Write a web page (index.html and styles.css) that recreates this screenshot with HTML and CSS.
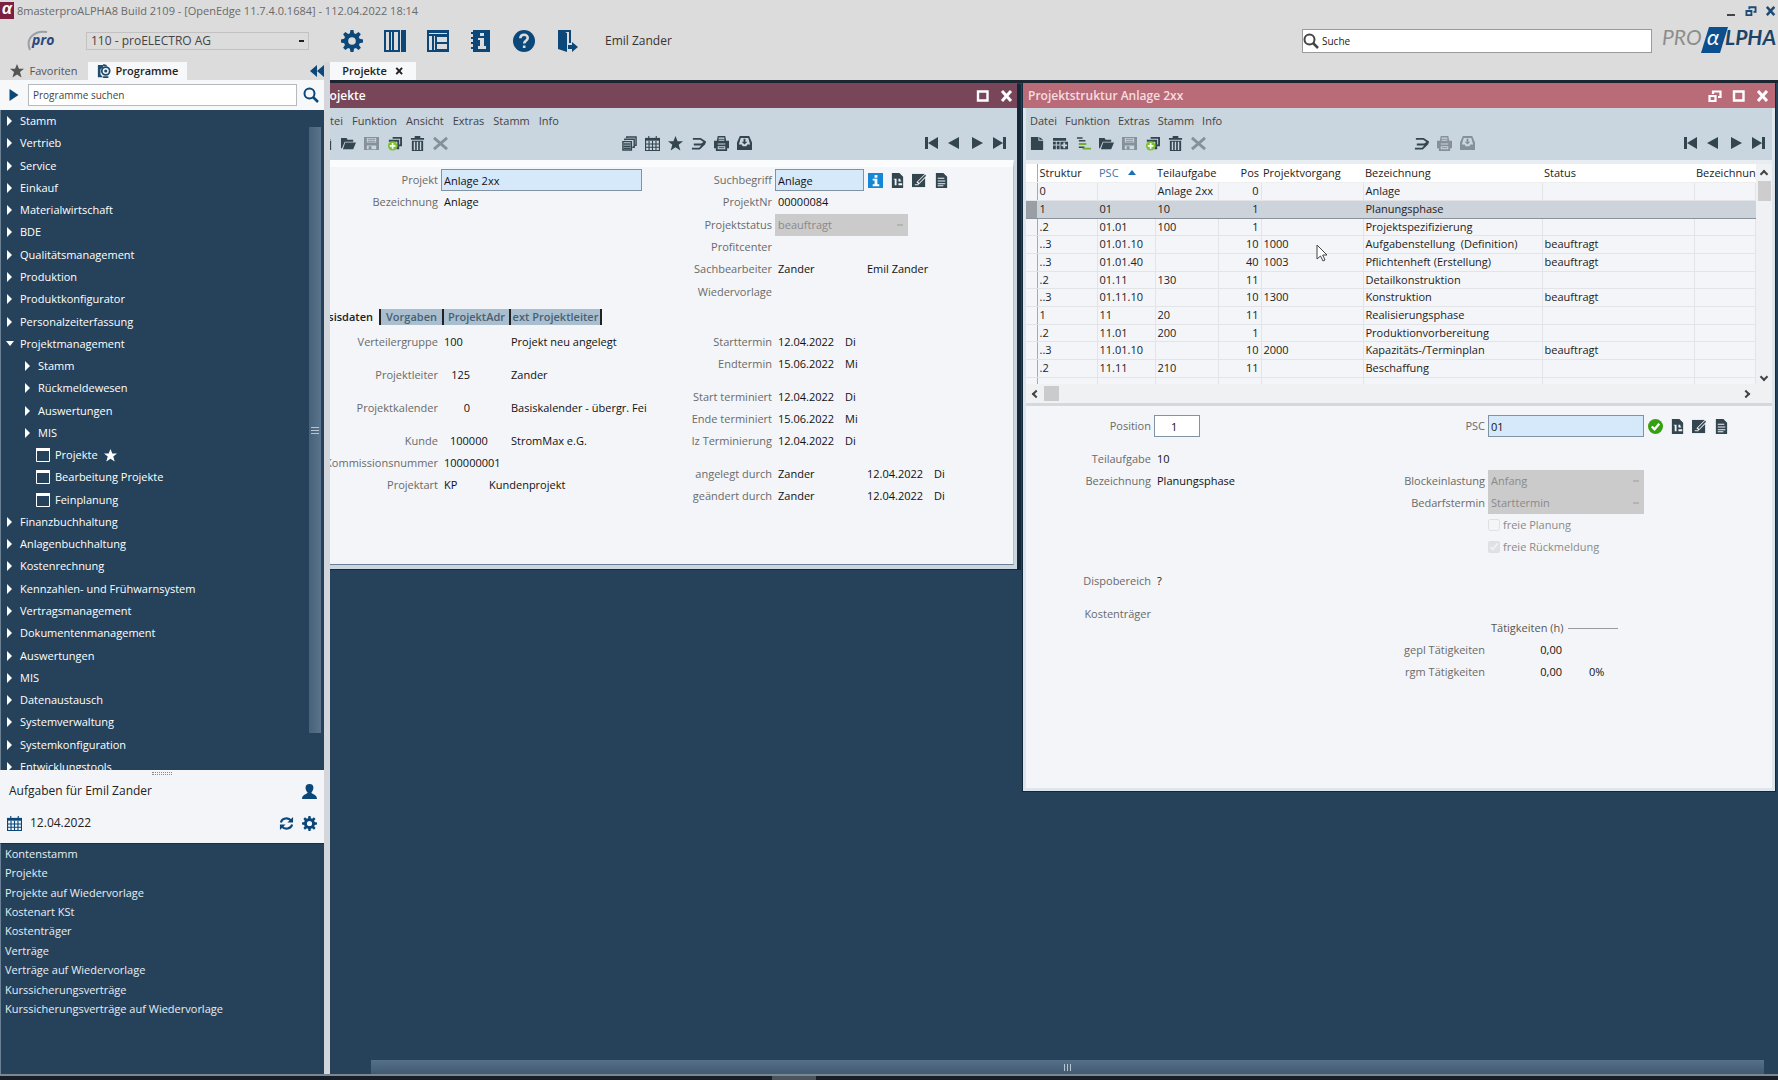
FILE: index.html
```html
<!DOCTYPE html>
<html lang="de">
<head>
<meta charset="utf-8">
<title>proALPHA – Projektstruktur</title>
<link rel="stylesheet" href="styles.css">
</head>
<body>
<svg class="sprite" aria-hidden="true">
  <symbol id="gear" viewBox="0 0 22 22"><path fill="currentColor" fill-rule="evenodd" d="M9.5 0h3l.5 3.2 1.8.8L17.500 2l2.300 2.300-2 2.800.8 1.700 3.400.6v3.200l-3.300.6-.8 1.800 2 2.700-2.300 2.300-2.700-1.900-1.900.7-.5 3.200h-3l-.6-3.200-1.800-.7L4.400 20l-2.300-2.300 1.900-2.700-.8-1.800L0 12.600V9.400l3.200-.6.800-1.700-1.900-2.800L4.400 2l2.700 1.900 1.800-.7zM11 7.200a3.800 3.800 0 1 0 0 7.600 3.800 3.800 0 0 0 0-7.600z"/></symbol>
  <symbol id="panel" viewBox="0 0 22 22"><path fill="currentColor" fill-rule="evenodd" d="M0 0h16v22H0zM2 2v18h3V2zm5 0v18h1V2zm3 0v18h4V2zM17 0h5v22h-5z"/></symbol>
  <symbol id="layout" viewBox="0 0 22 22"><path fill="currentColor" fill-rule="evenodd" d="M0 0h22v22H0zM2 3v1h18V3zM2 6v14h3V6zm5 0v14h1V6zm3 1v5h10V7zm0 7v5h10v-5z"/></symbol>
  <symbol id="infobook" viewBox="0 0 22 22"><path fill="currentColor" fill-rule="evenodd" d="M3 0h17v22H3v-3H1v-2h2v-3H1v-2h2V9H1V7h2V4H1V2h2zM10 3v3h4V3zM8 8v2h2v6H8v3h8v-3h-2V8z"/></symbol>
  <symbol id="help" viewBox="0 0 22 22"><circle cx="11" cy="11" r="11" fill="currentColor"/><path d="M7.300 8.300C7.500 3.500 15 3.700 14.700 8.200c-.2 2.600-3.500 2.500-3.500 5.300M11.200 15.500v2.600" fill="none" stroke="#dcdcdc" stroke-width="2.600"/></symbol>
  <symbol id="door" viewBox="0 0 22 22"><path fill="currentColor" d="M2 0h3l6 3v19l-9-3z"/><path fill="none" stroke="currentColor" stroke-width="2" d="M3 1h11v12"/><path fill="currentColor" d="M12 15h4v-3l6 5-6 5v-3h-4z"/></symbol>
  <symbol id="lens" viewBox="0 0 16 16"><circle cx="6.500" cy="6.500" r="5" fill="none" stroke="currentColor" stroke-width="2"/><path d="M10 10l5 5" stroke="currentColor" stroke-width="2.500"/></symbol>
  <symbol id="star" viewBox="0 0 16 16"><path fill="currentColor" d="M8 0l2.200 5.500H16l-4.600 3.700L13.200 15.500 8 11.900l-5.200 3.600 1.800-6.300L0 5.500h5.800z"/></symbol>
  <symbol id="gears" viewBox="0 0 16 16"><path fill="currentColor" d="M1 1h6v3L4 6v6l3 3H1z"/><circle cx="10" cy="8" r="4.500" fill="none" stroke="currentColor" stroke-width="2"/><circle cx="10" cy="8" r="1.800" fill="currentColor"/><path d="M7 1l4 1M7 15h6" stroke="currentColor" stroke-width="2"/></symbol>
  <symbol id="back" viewBox="0 0 14 12"><path fill="currentColor" d="M7 0v12L0 6zM14 0v12L7 6z"/></symbol>
  <symbol id="play" viewBox="0 0 10 12"><path fill="currentColor" d="M0 0l9 6-9 6z"/></symbol>
  <symbol id="win" viewBox="0 0 16 16"><path fill="none" stroke="currentColor" d="M1.500 1.500h13v13h-13z"/><path fill="currentColor" d="M1 1h14v3H1z"/></symbol>
  <symbol id="person" viewBox="0 0 16 16"><path fill="currentColor" d="M8 0c6 0 4.500 7 2 9 1 2 6 2 6 7H0c0-5 5-5 6-7-2.500-2-4-9 2-9z"/></symbol>
  <symbol id="cal" viewBox="0 0 16 16"><path fill="currentColor" d="M0 2h16v3H0z"/><path fill="none" stroke="currentColor" d="M.6 4v11.400h14.800V4M4.300 5v10M8 5v10M11.700 5v10M1 8.500h14M1 12h14M4 0v3M12 0v3" stroke-width="1.200"/></symbol>
  <symbol id="refresh" viewBox="0 0 16 16"><path fill="none" stroke="currentColor" stroke-width="2.200" d="M2 7c1-5 8-6 11-2M14 9c-1 5-8 6-11 2"/><path fill="currentColor" d="M15 1v6H9zM1 15V9h6z"/></symbol>
  <symbol id="doc" viewBox="0 0 16 16"><path fill="currentColor" d="M1 1h8v4h5v10H1zM10 1l4 3h-4z"/></symbol>
  <symbol id="rows" viewBox="0 0 16 16"><path fill="currentColor" fill-rule="evenodd" d="M0 2h14v3H0zM0 6h3v3H0zM4 6h3v3H4zM0 10h3v4H0zM4 10h3v4H4zM8 6h8v8H8zM11 7v2H9v2h2v2h2v-2h2V9h-2V7z"/></symbol>
  <symbol id="indent" viewBox="0 0 16 16"><path stroke="currentColor" stroke-width="1.600" d="M1 2h6M3 5h7M3 12h6"/><path stroke="#6fae2e" stroke-width="2" d="M3 8.500h8M7 13.500h9"/></symbol>
  <symbol id="folder" viewBox="0 0 16 16"><path fill="currentColor" d="M0 2h6l1 2h6v2H4l-3 7H0zM4.500 7H16l-3 7H2z"/></symbol>
  <symbol id="save" viewBox="0 0 16 16"><path fill="currentColor" fill-rule="evenodd" d="M0 1h16v14H0zM3 2v5h10V2zm0 8v4h10v-4z"/><path fill="currentColor" d="M4 3h8v1H4zM4 5h8v1H4zM5 11h3v3H5z"/></symbol>
  <symbol id="copy" viewBox="0 0 16 16"><path fill="none" stroke="currentColor" stroke-width="2" d="M6 2h9v8h-3M3 6V5h9v8h-2"/><circle cx="6" cy="10.500" r="5" fill="#7cc230"/><path d="M6 7.500v6M3 10.500h6" stroke="#fff" stroke-width="1.800"/></symbol>
  <symbol id="trash" viewBox="0 0 16 16"><path fill="currentColor" fill-rule="evenodd" d="M1 2h4V0h6v2h4v2H1zM2 5h12v11H2zM4 6v9h1.500V6zm3.200 0v9h1.500V6zm3.300 0v9H12V6z"/></symbol>
  <symbol id="cross" viewBox="0 0 16 16"><path stroke="currentColor" stroke-width="3" d="M1 2l14 12M15 2L1 14"/></symbol>
  <symbol id="stack" viewBox="0 0 16 16"><path fill="none" stroke="currentColor" stroke-width="1.500" d="M5 2V1h10v9h-2M3 4.500V3.500h10V12h-2M1 6h9v9H1zM2 8.500h7M2 11h7M2 13h7"/></symbol>
  <symbol id="share" viewBox="0 0 16 16"><path fill="none" stroke="currentColor" stroke-width="2" d="M2 3h8l5 3.500-4 2.500H3M1 13.500h8l6-6"/></symbol>
  <symbol id="print" viewBox="0 0 16 16"><path fill="currentColor" fill-rule="evenodd" d="M4 0h8l1 5h3v8h-2v3H2v-3H0V5h3zM5 1.500V5h6V1.500zM4 8v1h8V8zM4 11v3h8v-3z"/><path stroke="currentColor" d="M5 3.500h6M5 12.500h6"/></symbol>
  <symbol id="inbox" viewBox="0 0 16 16"><path fill="currentColor" fill-rule="evenodd" d="M3 0h10l3 7v8H0V7zM4 2L2 9h3l1 2h4l1-2h3l-2-7z"/><path fill="currentColor" d="M7 3h2v3h2L8 9 5 6h2z"/></symbol>
  <symbol id="first" viewBox="0 0 14 14"><path fill="currentColor" d="M1 1h3v12H1zM14 1v12L4 7z"/></symbol>
  <symbol id="prev" viewBox="0 0 14 14"><path fill="currentColor" d="M12 1v12L1 7z"/></symbol>
  <symbol id="next" viewBox="0 0 14 14"><path fill="currentColor" d="M2 1v12l11-6z"/></symbol>
  <symbol id="last" viewBox="0 0 14 14"><path fill="currentColor" d="M10 1h3v12h-3zM0 1v12l10-6z"/></symbol>
  <symbol id="infosq" viewBox="0 0 16 16"><path fill="#1587d6" d="M0 0h16v16H0z"/><path fill="#fff" d="M7 2h3v3H7zM5 6h5v6h2v2H5v-2h2V8H5z"/></symbol>
  <symbol id="docnum" viewBox="0 0 16 16"><path fill="currentColor" fill-rule="evenodd" d="M2 0h8l4 4v12H2zM4 6v1h1v6h2V6zm5 0v3h3V8h-1V6zm0 5v2h4v-2z"/></symbol>
  <symbol id="edit" viewBox="0 0 16 16"><path fill="currentColor" d="M0 1h14v14H0z"/><path d="M6 11l9-9" stroke="#f3f5f8" stroke-width="3.500"/><path d="M7 10l7.500-7.500M3 12h2" stroke="currentColor" stroke-width="1.600"/><path d="M3 12.500h4" stroke="#f3f5f8"/></symbol>
  <symbol id="note" viewBox="0 0 16 16"><path fill="currentColor" fill-rule="evenodd" d="M2 0h8l4 4v12H2zM4 5v1h7V5zm0 3v1h8V8zm0 3v1h8v-1zm0 2v1h6v-1z"/></symbol>
  <symbol id="ok" viewBox="0 0 16 16"><circle cx="8" cy="8" r="8" fill="#36a010"/><path d="M4 8l3 3 5-6" fill="none" stroke="#fff" stroke-width="2.500"/></symbol>
  <symbol id="restore" viewBox="0 0 14 12"><path fill="none" stroke="currentColor" stroke-width="2.200" d="M1.500 6h6v5h-6zM5 4V1.500h7.500V7H10"/></symbol>
  <symbol id="max" viewBox="0 0 14 12"><path fill="none" stroke="currentColor" stroke-width="2.400" d="M2 1.500h9.500v9H2z"/></symbol>
  <symbol id="close" viewBox="0 0 14 12"><path stroke="currentColor" stroke-width="3" d="M2 1l9 10M11 1L2 11"/></symbol>
</svg>

<div class="app">
  <header class="titlebar">
    <span class="appmark">α</span>
    <span class="apptitle">8masterproALPHA8 Build 2109 - [OpenEdge 11.7.4.0.1684] - 112.04.2022 18:14</span>
    <div class="winctl">
      <button aria-label="Minimieren"><i class="minus"></i></button>
      <button aria-label="Wiederherstellen"><svg><use href="#restore"/></svg></button>
      <button aria-label="Schließen"><svg><use href="#close"/></svg></button>
    </div>
  </header>

  <div class="topbar">
    <svg class="prologo" viewBox="0 0 32 22"><path d="M3 20C-2 8 8 0 20 2" fill="none" stroke="#9a9fa5" stroke-width="2"/><text x="5" y="15">pro</text></svg>
    <select class="company" aria-label="Firma"><option>110 - proELECTRO AG</option></select>
    <nav class="topicons">
      <button aria-label="Einstellungen"><svg><use href="#gear"/></svg></button>
      <button aria-label="Seitenleiste"><svg><use href="#panel"/></svg></button>
      <button aria-label="Layout"><svg><use href="#layout"/></svg></button>
      <button aria-label="Info"><svg><use href="#infobook"/></svg></button>
      <button aria-label="Hilfe"><svg><use href="#help"/></svg></button>
      <button aria-label="Abmelden"><svg><use href="#door"/></svg></button>
    </nav>
    <span class="user">Emil Zander</span>
    <label class="search"><svg><use href="#lens"/></svg><input type="text" value="Suche" aria-label="Suche"></label>
    <svg class="brand" viewBox="0 0 116 30"><text class="pro" x="0" y="19">PRO</text><path fill="#0b4f8f" d="M47 1h19l-8 26H39z"/><text class="alpha" x="45" y="19">α</text><text class="lpha" x="63" y="19">LPHA</text></svg>
  </div>

  <div class="body">
    <aside class="side">
      <div class="sidetabs">
        <button class="sidetab"><svg><use href="#star"/></svg>Favoriten</button>
        <button class="sidetab active"><svg><use href="#gears"/></svg>Programme</button>
        <button class="collapse" aria-label="Einklappen"><svg><use href="#back"/></svg></button>
      </div>
      <div class="sidesearch">
        <button aria-label="Start"><svg class="sm"><use href="#play"/></svg></button>
        <input type="text" value="Programme suchen" aria-label="Programme suchen">
        <button aria-label="Suchen"><svg><use href="#lens"/></svg></button>
      </div>
      <div class="tree">
        <ul>
          <li><i></i>Stamm</li>
          <li><i></i>Vertrieb</li>
          <li><i></i>Service</li>
          <li><i></i>Einkauf</li>
          <li><i></i>Materialwirtschaft</li>
          <li><i></i>BDE</li>
          <li><i></i>Qualitätsmanagement</li>
          <li><i></i>Produktion</li>
          <li><i></i>Produktkonfigurator</li>
          <li><i></i>Personalzeiterfassung</li>
          <li><i class="open"></i>Projektmanagement</li>
          <li class="sub"><i></i>Stamm</li>
          <li class="sub"><i></i>Rückmeldewesen</li>
          <li class="sub"><i></i>Auswertungen</li>
          <li class="sub"><i></i>MIS</li>
          <li class="leaf"><svg><use href="#win"/></svg>Projekte<svg class="fav"><use href="#star"/></svg></li>
          <li class="leaf"><svg><use href="#win"/></svg>Bearbeitung Projekte</li>
          <li class="leaf"><svg><use href="#win"/></svg>Feinplanung</li>
          <li><i></i>Finanzbuchhaltung</li>
          <li><i></i>Anlagenbuchhaltung</li>
          <li><i></i>Kostenrechnung</li>
          <li><i></i>Kennzahlen- und Frühwarnsystem</li>
          <li><i></i>Vertragsmanagement</li>
          <li><i></i>Dokumentenmanagement</li>
          <li><i></i>Auswertungen</li>
          <li><i></i>MIS</li>
          <li><i></i>Datenaustausch</li>
          <li><i></i>Systemverwaltung</li>
          <li><i></i>Systemkonfiguration</li>
          <li><i></i>Entwicklungstools</li>
        </ul>
        <div class="vbar"><div class="thumb"><i></i></div></div>
      </div>
      <section class="tasks">
        <div class="grip"></div>
        <div class="taskline"><h2>Aufgaben für Emil Zander</h2><button aria-label="Benutzer"><svg><use href="#person"/></svg></button></div>
        <div class="taskline"><svg><use href="#cal"/></svg><span class="date">12.04.2022</span><button aria-label="Aktualisieren"><svg><use href="#refresh"/></svg></button><button aria-label="Optionen"><svg><use href="#gear"/></svg></button></div>
      </section>
      <ul class="tasklist">
        <li>Kontenstamm</li>
        <li>Projekte</li>
        <li>Projekte auf Wiedervorlage</li>
        <li>Kostenart KSt</li>
        <li>Kostenträger</li>
        <li>Verträge</li>
        <li>Verträge auf Wiedervorlage</li>
        <li>Kurssicherungsverträge</li>
        <li>Kurssicherungsverträge auf Wiedervorlage</li>
      </ul>
    </aside>

    <main class="main">
      <div class="doctabs"><button class="doctab">Projekte <svg><use href="#close"/></svg></button></div>
      <div class="desktop">

        <section class="window projects">
          <header class="wtitle"><h1>Projekte</h1>
            <button aria-label="Maximieren"><svg><use href="#max"/></svg></button>
            <button aria-label="Schließen"><svg><use href="#close"/></svg></button>
          </header>
          <nav class="menu"><a href="#">Datei</a><a href="#">Funktion</a><a href="#">Ansicht</a><a href="#">Extras</a><a href="#">Stamm</a><a href="#">Info</a></nav>
          <div class="tools">
            <div class="group">
              <button aria-label="Neu"><svg><use href="#doc"/></svg></button>
              <button aria-label="Öffnen"><svg><use href="#folder"/></svg></button>
              <button aria-label="Speichern" disabled><svg><use href="#save"/></svg></button>
              <button aria-label="Kopieren"><svg><use href="#copy"/></svg></button>
              <button aria-label="Löschen"><svg><use href="#trash"/></svg></button>
              <button aria-label="Abbrechen" disabled><svg><use href="#cross"/></svg></button>
            </div>
            <div class="group mid">
              <button aria-label="Fenster"><svg><use href="#stack"/></svg></button>
              <button aria-label="Kalender"><svg><use href="#cal"/></svg></button>
              <button aria-label="Favorit"><svg><use href="#star"/></svg></button>
              <button aria-label="Weiterleiten"><svg><use href="#share"/></svg></button>
              <button aria-label="Drucken"><svg><use href="#print"/></svg></button>
              <button aria-label="Ablage"><svg><use href="#inbox"/></svg></button>
            </div>
            <div class="group end">
              <button aria-label="Erster"><svg><use href="#first"/></svg></button>
              <button aria-label="Voriger"><svg><use href="#prev"/></svg></button>
              <button aria-label="Nächster"><svg><use href="#next"/></svg></button>
              <button aria-label="Letzter"><svg><use href="#last"/></svg></button>
            </div>
          </div>
          <div class="wbody">
            <div class="form headform">
              <div class="col">
                <div class="row"><label for="projekt">Projekt</label><input id="projekt" class="wide" type="text" value="Anlage 2xx"></div>
                <div class="row"><span class="lbl">Bezeichnung</span><b>Anlage</b></div>
              </div>
              <div class="col">
                <div class="row"><label for="such">Suchbegriff</label><input id="such" class="mids" type="text" value="Anlage"><span class="icons"><svg><use href="#infosq"/></svg><svg><use href="#docnum"/></svg><svg><use href="#edit"/></svg><svg><use href="#note"/></svg></span></div>
                <div class="row"><span class="lbl">ProjektNr</span><b>00000084</b></div>
                <div class="row"><label for="status">Projektstatus</label><select id="status" class="state" disabled><option>beauftragt</option></select></div>
                <div class="row"><span class="lbl">Profitcenter</span></div>
                <div class="row"><span class="lbl">Sachbearbeiter</span><b class="w-person">Zander</b><b>Emil Zander</b></div>
                <div class="row"><span class="lbl">Wiedervorlage</span></div>
              </div>
            </div>
            <div class="tabs"><button class="on">Basisdaten</button><button class="t1">Vorgaben</button><button class="t2">ProjektAdr</button><button class="t3">ext Projektleiter</button></div>
            <div class="form tabform">
              <div class="col">
                <div class="row"><span class="lbl">Verteilergruppe</span><b class="w-val">100</b><b>Projekt neu angelegt</b></div>
                <div class="row gap"><span class="lbl">Projektleiter</span><b class="w-val num">125</b><b>Zander</b></div>
                <div class="row gap"><span class="lbl">Projektkalender</span><b class="w-val num">0</b><b>Basiskalender - übergr. Fei</b></div>
                <div class="row gap"><span class="lbl">Kunde</span><b class="w-val cust">100000</b><b>StromMax e.G.</b></div>
                <div class="row"><span class="lbl">Kommissionsnummer</span><b>100000001</b></div>
                <div class="row"><span class="lbl">Projektart</span><b class="w-kind">KP</b><b>Kundenprojekt</b></div>
              </div>
              <div class="col">
                <div class="row"><span class="lbl">Starttermin</span><b class="w-val">12.04.2022</b><b>Di</b></div>
                <div class="row"><span class="lbl">Endtermin</span><b class="w-val">15.06.2022</b><b>Mi</b></div>
                <div class="row gap"><span class="lbl">Start terminiert</span><b class="w-val">12.04.2022</b><b>Di</b></div>
                <div class="row"><span class="lbl">Ende terminiert</span><b class="w-val">15.06.2022</b><b>Mi</b></div>
                <div class="row"><span class="lbl">lz Terminierung</span><b class="w-val">12.04.2022</b><b>Di</b></div>
                <div class="row gap"><span class="lbl">angelegt durch</span><b class="w-person">Zander</b><b class="w-val">12.04.2022</b><b>Di</b></div>
                <div class="row"><span class="lbl">geändert durch</span><b class="w-person">Zander</b><b class="w-val">12.04.2022</b><b>Di</b></div>
              </div>
            </div>
          </div>
        </section>

        <section class="window structure">
          <header class="wtitle"><h1>Projektstruktur Anlage 2xx</h1>
            <button aria-label="Wiederherstellen"><svg><use href="#restore"/></svg></button>
            <button aria-label="Maximieren"><svg><use href="#max"/></svg></button>
            <button aria-label="Schließen"><svg><use href="#close"/></svg></button>
          </header>
          <nav class="menu"><a href="#">Datei</a><a href="#">Funktion</a><a href="#">Extras</a><a href="#">Stamm</a><a href="#">Info</a></nav>
          <div class="tools">
            <div class="group">
              <button aria-label="Neu"><svg><use href="#doc"/></svg></button>
              <button aria-label="Zeile einfügen"><svg><use href="#rows"/></svg></button>
              <button aria-label="Struktur"><svg><use href="#indent"/></svg></button>
              <button aria-label="Öffnen"><svg><use href="#folder"/></svg></button>
              <button aria-label="Speichern" disabled><svg><use href="#save"/></svg></button>
              <button aria-label="Kopieren"><svg><use href="#copy"/></svg></button>
              <button aria-label="Löschen"><svg><use href="#trash"/></svg></button>
              <button aria-label="Abbrechen" disabled><svg><use href="#cross"/></svg></button>
            </div>
            <div class="group mid">
              <button aria-label="Weiterleiten"><svg><use href="#share"/></svg></button>
              <button aria-label="Drucken" disabled><svg><use href="#print"/></svg></button>
              <button aria-label="Ablage" disabled><svg><use href="#inbox"/></svg></button>
            </div>
            <div class="group end">
              <button aria-label="Erster"><svg><use href="#first"/></svg></button>
              <button aria-label="Voriger"><svg><use href="#prev"/></svg></button>
              <button aria-label="Nächster"><svg><use href="#next"/></svg></button>
              <button aria-label="Letzter"><svg><use href="#last"/></svg></button>
            </div>
          </div>
          <div class="gridwrap">
            <div class="gridbox">
              <table>
                <colgroup><col class="c0"><col class="c1"><col class="c2"><col class="c3"><col class="c4"><col class="c5"><col class="c6"><col class="c7"><col></colgroup>
                <thead><tr><th></th><th>Struktur</th><th class="sort">PSC<i></i></th><th>Teilaufgabe</th><th class="r">Pos</th><th>Projektvorgang</th><th>Bezeichnung</th><th>Status</th><th>Bezeichnung</th></tr></thead>
                <tbody>
                  <tr><td></td><td>0</td><td></td><td>Anlage 2xx</td><td>0</td><td></td><td>Anlage</td><td></td><td></td></tr>
                  <tr class="sel"><td></td><td>1</td><td>01</td><td>10</td><td>1</td><td></td><td>Planungsphase</td><td></td><td></td></tr>
                  <tr><td></td><td>.2</td><td>01.01</td><td>100</td><td>1</td><td></td><td>Projektspezifizierung</td><td></td><td></td></tr>
                  <tr><td></td><td>..3</td><td>01.01.10</td><td></td><td>10</td><td>1000</td><td>Aufgabenstellung&nbsp; (Definition)</td><td>beauftragt</td><td></td></tr>
                  <tr><td></td><td>..3</td><td>01.01.40</td><td></td><td>40</td><td>1003</td><td>Pflichtenheft (Erstellung)</td><td>beauftragt</td><td></td></tr>
                  <tr><td></td><td>.2</td><td>01.11</td><td>130</td><td>11</td><td></td><td>Detailkonstruktion</td><td></td><td></td></tr>
                  <tr><td></td><td>..3</td><td>01.11.10</td><td></td><td>10</td><td>1300</td><td>Konstruktion</td><td>beauftragt</td><td></td></tr>
                  <tr><td></td><td>1</td><td>11</td><td>20</td><td>11</td><td></td><td>Realisierungsphase</td><td></td><td></td></tr>
                  <tr><td></td><td>.2</td><td>11.01</td><td>200</td><td>1</td><td></td><td>Produktionvorbereitung</td><td></td><td></td></tr>
                  <tr><td></td><td>..3</td><td>11.01.10</td><td></td><td>10</td><td>2000</td><td>Kapazitäts-/Terminplan</td><td>beauftragt</td><td></td></tr>
                  <tr><td></td><td>.2</td><td>11.11</td><td>210</td><td>11</td><td></td><td>Beschaffung</td><td></td><td></td></tr>
                  <tr><td></td><td></td><td></td><td></td><td></td><td></td><td></td><td></td><td></td></tr>
                </tbody>
              </table>
              <div class="gv"><i class="up"></i><div class="knob"></div><i class="down"></i></div>
            </div>
            <div class="gh"><i class="left"></i><div class="knob"></div><i class="right"></i></div>
          </div>
          <div class="wbody">
            <div class="form detail">
              <div class="col">
                <div class="row"><label for="pos">Position</label><input id="pos" class="pos" type="text" value="1"></div>
                <div class="row gap"><span class="lbl">Teilaufgabe</span><b>10</b></div>
                <div class="row"><span class="lbl">Bezeichnung</span><b>Planungsphase</b></div>
                <div class="row far"><span class="lbl">Dispobereich</span><b>?</b></div>
                <div class="row gap"><span class="lbl">Kostenträger</span></div>
              </div>
              <div class="col">
                <div class="row"><label for="psc">PSC</label><input id="psc" class="psc" type="text" value="01"><span class="icons"><svg><use href="#ok"/></svg><svg><use href="#docnum"/></svg><svg><use href="#edit"/></svg><svg><use href="#note"/></svg></span></div>
                <div class="row gap3"><label for="block">Blockeinlastung</label><select id="block" class="psc" disabled><option>Anfang</option></select></div>
                <div class="row"><label for="bedarf">Bedarfstermin</label><select id="bedarf" class="psc" disabled><option>Starttermin</option></select></div>
                <div class="row check"><input id="fp" type="checkbox" disabled><label for="fp">freie Planung</label></div>
                <div class="row check"><input id="fr" type="checkbox" checked disabled><label for="fr">freie Rückmeldung</label></div>
                <div class="row sect"><span>Tätigkeiten (h)</span><hr></div>
                <div class="row"><span class="lbl">gepl Tätigkeiten</span><b class="hours">0,00</b></div>
                <div class="row"><span class="lbl">rgm Tätigkeiten</span><b class="hours">0,00</b><b>0%</b></div>
              </div>
            </div>
          </div>
        </section>

        <svg class="cursor" viewBox="0 0 12 18"><path d="M1 1v14l3.500-3 2.500 5 2-1-2.300-5H11z" fill="#fff" stroke="#444"/></svg>
      </div>
      <div class="hscroll"><div class="hthumb"><i></i></div></div>
    </main>
  </div>
  <footer class="edge"><span></span></footer>
</div>
</body>
</html>
```
FILE: styles.css
```css
* { box-sizing: border-box; }
body { margin: 0; font: 11px/16px "Open Sans", "Noto Sans", sans-serif; color: #222; background: #26425a; }
button { border: 0; background: none; padding: 0; margin: 0; font: inherit; color: inherit; display: flex; align-items: center; justify-content: center; }
input, select { font: inherit; color: inherit; margin: 0; border-radius: 0; }
select { appearance: none; }
ul { list-style: none; margin: 0; padding: 0; }
h1, h2 { margin: 0; }
a { color: inherit; text-decoration: none; }
svg { width: 16px; height: 16px; flex: none; display: block; }
.sprite { position: absolute; width: 0; height: 0; }

.app { height: 100vh; display: flex; flex-direction: column; overflow: hidden; }

.titlebar { height: 21px; flex: none; background: #dcdcdc; display: flex; align-items: center; }
.appmark { width: 14px; height: 17px; background: #7d2040; color: #fff; font: italic bold 16px/14px "Liberation Sans", sans-serif; text-align: center; }
.apptitle { margin-left: 3px; flex: 1; color: #6a6a6a; }
.winctl { display: flex; gap: 6px; color: #1c4b74; }
.winctl button { width: 14px; height: 14px; }
.winctl svg { width: 12px; height: 10px; }
.minus { width: 8px; height: 2px; margin-top: 8px; background: #444; }

.topbar { height: 41px; flex: none; padding-bottom: 2px; background: #dcdcdc; display: flex; align-items: center; }
.prologo { width: 32px; height: 22px; margin-left: 27px; }
.prologo text { font: italic bold 14px "Open Sans", sans-serif; fill: #2a4a80; }
.company { width: 223px; height: 18px; margin-left: 27px; padding: 0 4px; border: 1px solid #c2c2c2; color: #444; font-size: 12px; line-height: 14px;
  background: #dcdcdc linear-gradient(#222, #222) no-repeat right 4px center / 5px 2px; }
.topicons { display: flex; gap: 21px; margin-left: 32px; color: #0b4778; }
.topicons svg { width: 22px; height: 22px; }
.user { margin-left: 27px; flex: 1; font-size: 12px; color: #333; }
.search { width: 350px; height: 24px; border: 1px solid #9a9a9a; background: #fff; display: flex; align-items: center; gap: 3px; color: #444; }
.search input { flex: 1; border: 0; padding: 0; background: none; color: #222; font-size: 10px; }
.brand { width: 116px; height: 30px; margin-left: 10px; overflow: hidden; }
.brand text { font-family: Lato, sans-serif; font-style: italic; font-size: 21px; }
.brand .pro { fill: #8d8d8d; }
.brand .alpha { fill: #fff; font-size: 22px; }
.brand .lpha { fill: #1c4468; font-weight: 700; }

.body { flex: 1; min-height: 0; display: flex; }

.side { width: 330px; flex: none; display: flex; flex-direction: column; border-right: 6px solid #d3d7dc; color: #fff; }
.sidetabs { height: 18px; flex: none; background: #dcdcdc; display: flex; align-items: center; color: #555; }
.sidetab { width: 88px; height: 18px; gap: 5px; }
.sidetab svg { width: 14px; height: 14px; }
.sidetab.active { width: 99px; background: #f6f8fa; font-weight: 600; color: #222; }
.sidetab.active svg { color: #1f4c6e; }
.collapse { margin-left: auto; color: #0b4778; }
.collapse svg { width: 14px; height: 12px; }
.sidesearch { height: 30px; flex: none; background: #f6f8fa; display: flex; align-items: center; padding: 0 5px 0 9px; gap: 6px; color: #0b4778; }
.sidesearch input { flex: 1; min-width: 0; height: 22px; margin-left: 2px; padding: 0 4px; border: 1px solid #b4bac0; background: #fff; color: #444; font-size: 10px; }
.sidesearch .sm { width: 11px; height: 12px; }
.tree { height: 660px; flex: none; display: flex; overflow: hidden; border-left: 1px solid #6b8296; align-items: flex-start; }
.tree ul { flex: 1; height: 668px; display: grid; grid-auto-rows: 1fr; }
.tree li { display: flex; align-items: center; padding-left: 6px; }
.tree li i { width: 0; height: 0; border: 5px solid transparent; border-left-color: #fff; border-right-width: 0; margin-right: 8px; }
.tree li i.open { border: 4px solid transparent; border-top: 5px solid #fff; border-bottom-width: 0; margin: 0 6px 0 -1px; }
.tree .sub { padding-left: 24px; }
.tree .leaf { padding-left: 34px; gap: 4px; }
.fav { width: 13px; height: 13px; margin-left: 2px; }
.vbar { width: 15px; height: 660px; padding: 17px 3px 37px 0; }
.vbar .thumb { height: 606px; background: linear-gradient(90deg, #46617a, #5b748b); display: flex; align-items: center; justify-content: center; }
.vbar i { width: 8px; height: 7px; background: repeating-linear-gradient(#b8c6d2 0 1px, transparent 1px 3px); }
.tasks { height: 73px; flex: none; background: #f3f5f8; color: #333; padding-top: 2px; }
.grip { width: 20px; height: 3px; margin: 0 auto; border-top: 1px dotted #888; border-bottom: 1px dotted #888; }
.taskline { display: flex; align-items: center; height: 32px; padding: 0 7px; gap: 8px; color: #0b4778; }
.taskline h2 { flex: 1; font-size: 12px; font-weight: 400; color: #222; padding-left: 2px; }
.taskline .date { flex: 1; font-size: 12px; color: #222; }
.taskline svg { width: 15px; height: 15px; }
.tasklist { flex: 1; border-left: 1px solid #6b8296; border-top: 1px solid #1c2f40; display: grid; grid-template-rows: repeat(9, 1fr) 55px; }
.tasklist li { display: flex; align-items: center; padding-left: 4px; color: #e8eef4; }

.main { flex: 1; min-width: 0; display: flex; flex-direction: column; }
.doctabs { height: 18px; flex: none; background: #dcdcdc; }
.doctab { width: 86px; height: 18px; background: #f6f8fa; font-weight: 600; gap: 8px; }
.doctab svg { width: 9px; height: 8px; }
.desktop { flex: 1; position: relative; overflow: hidden; border-top: 3px solid #1c2630; }
.window { position: absolute; top: 0; background: #f3f5f8; display: flex; flex-direction: column; }
.projects { left: -16px; width: 703px; height: 486px; border: solid #c9d5df; border-width: 0 3px 4px 0; box-shadow: 4px 1px 0 #13293a; }
.structure { left: 693px; width: 752px; height: 708px; border: 3px solid #dde6ed; border-width: 0 3px 3px; box-shadow: 0 0 0 1px #13293a; }
.wtitle { height: 25px; flex: none; margin: 0 -3px; background: #784658; color: #fff; display: flex; align-items: center; padding: 0 5px; gap: 10px; }
.projects .wtitle { margin-left: 0; padding: 0 3px; }
.structure .wtitle { background: #b96c78; }
.wtitle h1 { flex: 1; font-size: 12px; font-weight: 600; }
.structure h1 { color: #f5dde1; }
.wtitle svg { width: 14px; height: 12px; }
.menu { height: 25px; flex: none; background: #c9d5df; display: flex; align-items: center; padding-left: 4px; gap: 8px; color: #444; }
.projects .menu { padding-left: 2px; gap: 9px; }
.tools { height: 27px; flex: none; background: #c9d5df; padding: 0 6px 7px 4px; display: flex; align-items: center; color: #33454f; }
.projects .tools { padding-right: 7px; }
.group { display: flex; gap: 8px; }
.group svg { width: 15px; height: 15px; }
.group button:disabled { color: #86909a; }
.group.end { margin-left: auto; gap: 9px; }
.group.end svg { width: 14px; height: 14px; }
.projects .mid { margin-left: 174px; }
.structure .mid { margin-left: 208px; }
.wbody { flex: 1; }
.projects .wbody { border-top: 7px solid #fbfcfd; border-bottom: 1px solid #6a7f95; border-right: 1px solid #b4c0cc; padding-top: 2px; }

.form { display: grid; color: #111; }
.col { display: flex; flex-direction: column; }
.row { height: 22px; display: flex; align-items: center; }
.row .lbl, .row label { text-align: right; color: #6a6a6a; padding-right: 3px; white-space: nowrap; flex: none; }
.row b { font-weight: 400; padding-left: 3px; white-space: nowrap; }
.row input[type=text] { height: 22px; border: 1px solid #7f93a5; background: #d6e9fb; padding: 0 2px; }
.row select { height: 22px; border: 0; background: #cbcbcb linear-gradient(#b4b4b4, #b4b4b4) no-repeat right 5px center / 6px 2px; color: #8a8a8a; padding: 0 3px; opacity: 1; }
.gap { margin-top: 11px; }
.gap3 { margin-top: 33px; }
.far { margin-top: 78px; }
.icons { display: flex; gap: 7px; margin-left: 4px; color: #33454f; }
.icons svg { width: 15px; height: 15px; }
.headform, .tabform { grid-template-columns: 351px 1fr; }
.projects .col:first-child .lbl, .projects .col:first-child label { width: 127px; }
.projects .col:last-child .lbl, .projects .col:last-child label { width: 110px; }
.headform { height: 134px; }
.headform .col { display: grid; grid-template-rows: repeat(6, 1fr); }
.wide { width: 201px; }
.mids { width: 89px; }
.state { width: 133px; }
.w-person { width: 89px; }
.w-val { width: 67px; }
.w-kind { width: 45px; }
.num { padding-right: 38px; text-align: right; }
.row .cust { padding-left: 9px; }
.tabs { display: flex; height: 16px; margin-top: 6px; color: #4a6072; }
.tabs button { border-right: 2px solid #222; font-weight: 600; background: #a9bfcf; width: 63px; }
.tabs .on { width: 67px; background: none; color: #222; justify-content: flex-end; padding-right: 6px; }
.tabs .t2 { width: 67px; }
.tabs .t3 { width: 91px; }
.tabform { margin-top: 6px; }

.gridwrap { flex: none; border-top: 4px solid #e8edf1; border-bottom: 3px solid #d5d9dd; background: #f3f5f8; }
.gridbox { height: 220px; display: flex; overflow: hidden; align-items: flex-start; }
table { flex: 1; width: 100%; table-layout: fixed; border-collapse: collapse; }
.c0 { width: 11px; } .c1 { width: 60px; } .c2 { width: 58px; } .c3 { width: 63px; } .c4 { width: 43px; } .c5 { width: 102px; } .c6 { width: 179px; } .c7 { width: 152px; }
th, td { height: 18px; padding: 0 2px; line-height: 14px; text-align: left; font-weight: 400; white-space: nowrap; overflow: hidden; border-right: 1px solid #e2e4e8; border-bottom: 1px solid #e2e4e8; }
th { background: #fff; border-right: 0; border-bottom-color: #eee; }
tr:nth-child(3n) td { height: 17px; }
td:first-child, th:first-child { border-right: 1px solid #aaa; }
td:nth-child(5), th.r { text-align: right; }
th.sort { color: #3b78a8; }
th.sort i { display: inline-block; margin-left: 9px; border: 4px solid transparent; border-top: 0; border-bottom: 5px solid #1a6fb5; vertical-align: 2px; }
.sel td { background: #cdd3db; border-top: 1px solid #8a929c; border-bottom: 1px solid #8a929c; border-right-color: #cdd3db; }
.sel td:first-child { background: #9a9fa6; }
.gv { width: 16px; height: 220px; display: flex; flex-direction: column; align-items: center; padding: 7px 0 0; background: #f0f1f4; }
.gv .knob { width: 13px; height: 20px; margin-top: 4px; background: #cdcdcd; }
.gv .down { margin-top: auto; margin-bottom: 4px; }
.gh { height: 19px; background: #f0f1f3; display: flex; align-items: center; padding: 0 23px 0 7px; }
.gh .knob { width: 15px; height: 15px; margin-left: 5px; background: #cbcbcb; }
.gh .right { margin-left: auto; }
.up, .down, .left, .right { width: 6px; height: 6px; border: solid #444; border-width: 2px 0 0 2px; transform: rotate(45deg); }
.down { transform: rotate(225deg); }
.left { transform: rotate(-45deg); }
.right { transform: rotate(135deg); }

.detail { grid-template-columns: 334px 1fr; padding-top: 9px; }
.detail .lbl, .detail label { width: 128px; }
.row .pos { width: 46px; }
.row input.pos { background: #fff; padding-left: 16px; }
.psc { width: 156px; }
.row.check { padding-left: 128px; }
.row.check label { width: auto; padding-left: 3px; color: #8a8a8a; }
.check input { width: 12px; height: 12px; opacity: .5; }
.row.sect { margin-top: 59px; padding-left: 131px; gap: 4px; color: #555; }
.sect hr { width: 50px; margin: 0; border: 0; border-top: 1px solid #999; }
.hours { width: 98px; padding-right: 24px; text-align: right; }
.cursor { position: absolute; left: 986px; top: 161px; width: 12px; height: 18px; }

.hscroll { height: 14px; flex: none; padding: 0 14px 0 41px; }
.hthumb { height: 14px; background: linear-gradient(#56708a, #405a72); display: flex; justify-content: center; align-items: center; }
.hthumb i { width: 7px; height: 7px; background: repeating-linear-gradient(90deg, #b8c6d2 0 1px, transparent 1px 3px); }
.edge { height: 6px; flex: none; border-top: 2px solid #7c8790; background: #161f28; }
.edge span { display: block; width: 44px; height: 4px; margin-left: 772px; background: #4a545d; }
```
